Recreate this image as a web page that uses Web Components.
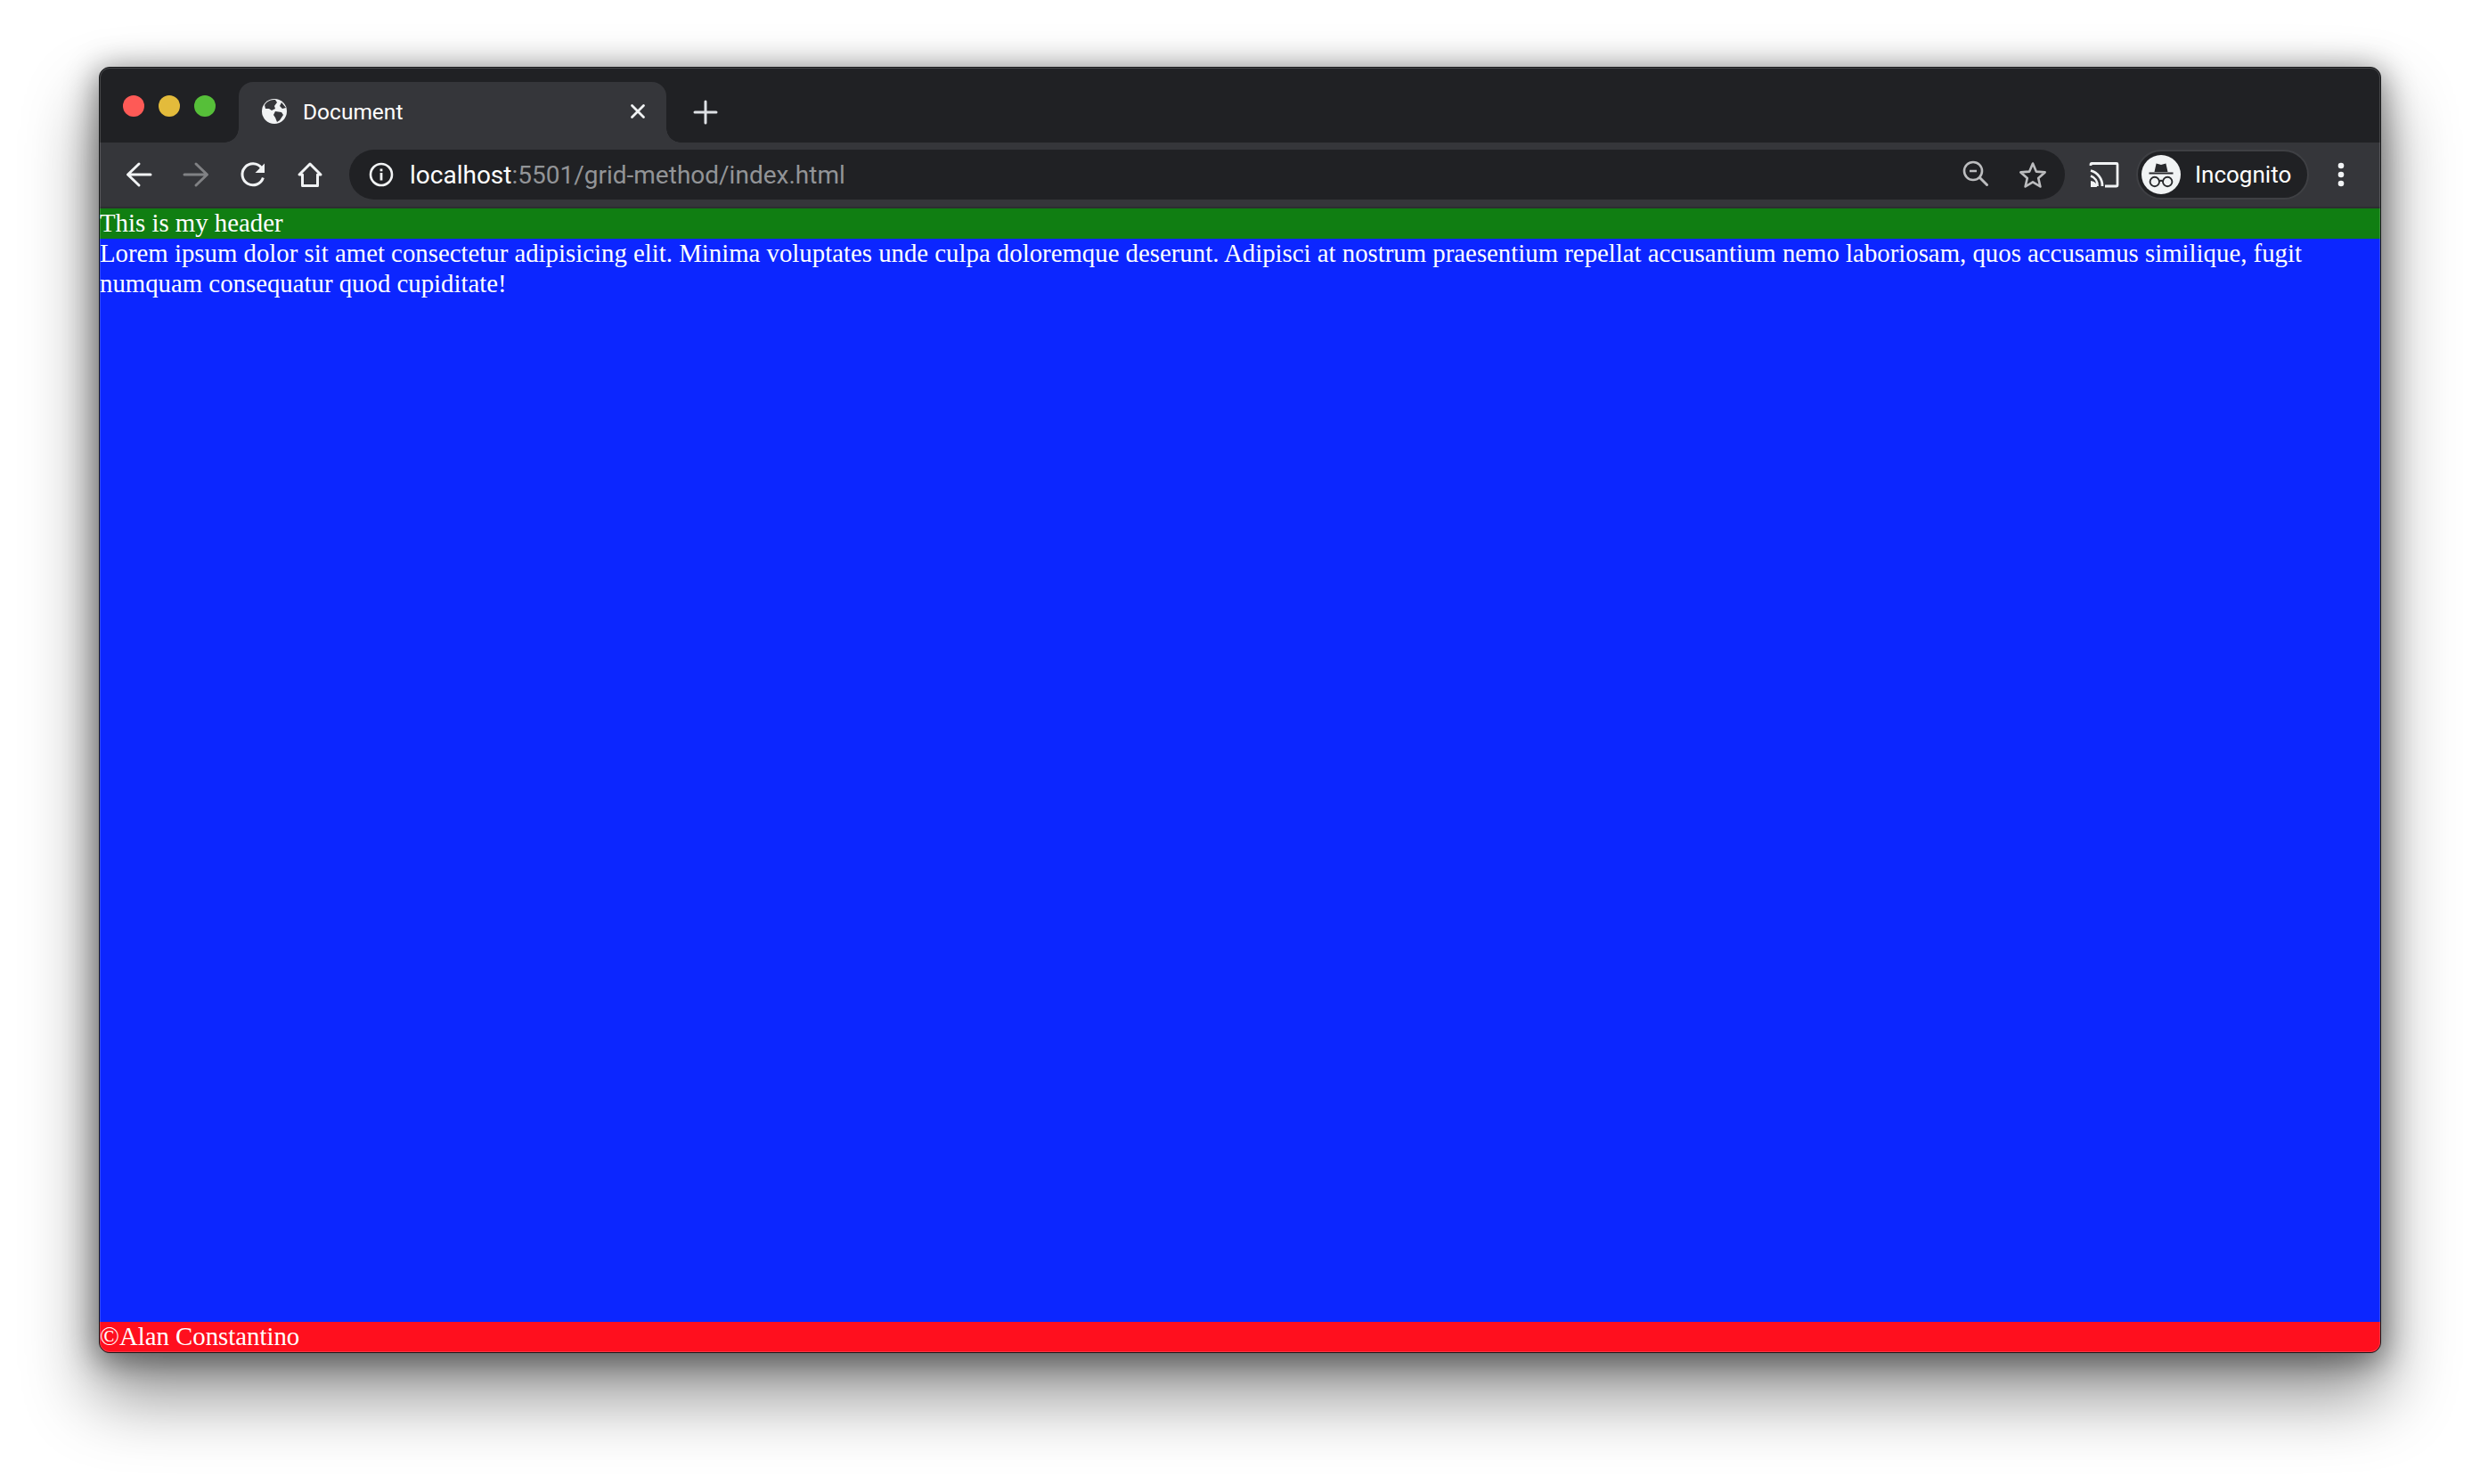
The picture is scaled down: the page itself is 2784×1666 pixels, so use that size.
<!DOCTYPE html>
<html lang="en"><head><meta charset="utf-8"><title>Document</title>
<style>
html,body{margin:0;height:100%;background:#fff}
body{display:flex;flex-direction:column;box-sizing:border-box;padding:75px 111px 147px 111px;font-family:"Liberation Serif",serif}
</style></head>
<body>
<browser-window>
  <tab-strip slot="chrome"><browser-tab>Document</browser-tab></tab-strip>
  <tool-bar slot="chrome"></tool-bar>
  <page-frame>
    <span slot="header">This is my header</span>
    Lorem ipsum dolor sit amet consectetur adipisicing elit. Minima voluptates unde culpa doloremque deserunt. Adipisci at nostrum praesentium repellat accusantium nemo laboriosam, quos accusamus similique, fugit numquam consequatur quod cupiditate!
    <span slot="footer">©Alan Constantino</span>
  </page-frame>
</browser-window>
<script>
const def=(name,html)=>customElements.define(name,class extends HTMLElement{
  constructor(){super();this.attachShadow({mode:"open"}).innerHTML=html;}
});
def("browser-window",`<style>
:host{flex:1;display:flex;flex-direction:column;min-height:0;box-sizing:border-box;position:relative;border:1px solid #17181a;border-radius:12px;overflow:hidden;background:#202124;box-shadow:0 44px 78px 6px rgba(0,0,0,.42),0 6px 34px 4px rgba(0,0,0,.42)}
:host::after{content:"";position:absolute;inset:0;border-radius:11px;box-shadow:inset 0 0 0 1px rgba(255,255,255,.17);pointer-events:none}
</style><slot name="chrome"></slot><slot></slot>`);
def("tab-strip",`<style>
:host{display:flex;align-items:flex-start;height:84px;box-sizing:border-box;padding:16px 0 0 26px;background:#202124;flex:none}
.lights{display:flex;gap:16px;margin-top:15px;margin-right:26px}
.lights i{width:24px;height:24px;border-radius:50%;display:block}
.new{width:32px;height:32px;margin:18px 0 0 28px}
</style>
<div class="lights"><i style="background:#fe5a56"></i><i style="background:#e3bb3b"></i><i style="background:#56bf39"></i></div>
<slot></slot>
<svg class="new" viewBox="0 0 32 32"><path d="M16 4V28M4 16H28" stroke="#dee1e5" stroke-width="3" stroke-linecap="round" fill="none"/></svg>`);
def("browser-tab",`<style>
:host{display:flex;align-items:center;position:relative;width:480px;height:68px;box-sizing:border-box;padding:0 22px 2px 26px;background:#35363a;border-radius:16px 16px 0 0;color:#fff;font:24.5px Roboto,sans-serif}
:host::before,:host::after{content:"";position:absolute;bottom:0;width:16px;height:16px}
:host::before{left:-16px;background:radial-gradient(circle at 0 0,transparent 15.5px,#35363a 16px)}
:host::after{right:-16px;background:radial-gradient(circle at 100% 0,transparent 15.5px,#35363a 16px)}
.globe{width:28px;height:28px;margin-right:18px;flex:none}
.t{flex:1}
.x{width:20px;height:20px;flex:none}
</style>
<svg class="globe" viewBox="0 0 28 28"><circle cx="14" cy="14" r="14" fill="#f1f3f4"/><path d="M3 7 C6 2 10 1 15 1 L17 4 L14 8 L15 11 L11 13 L8 11 L4 11 Z M15 14 L22 15 L24 18 L20 24 L17 26 L15 21 L13 18 Z M22 4 L27 10 L23 11 L20 8 Z" fill="#35363a"/></svg>
<span class="t"><slot></slot></span>
<svg class="x" viewBox="0 0 20 20"><path d="M3.5 3.5L16.5 16.5M16.5 3.5L3.5 16.5" stroke="#f1f3f4" stroke-width="2.8" stroke-linecap="round" fill="none"/></svg>`);
def("tool-button",`<style>
:host{display:flex;align-items:center;justify-content:center;width:64px;height:64px;flex:none}
</style><slot></slot>`);
def("omni-box",`<style>
:host{flex:1;display:flex;align-items:center;height:56px;box-sizing:border-box;padding:0 20px 0 22px;background:#202124;border-radius:28px;color:#fff;font:28px Roboto,sans-serif;min-width:0}
.url{flex:1;margin-left:18px;white-space:nowrap}
.url b{font-weight:400;color:#929497}
svg{flex:none;display:block}
.info{width:28px;height:28px}
.zoom{width:32px;height:32px;margin-right:32px}
.star{width:32px;height:32px}
</style>
<svg class="info" viewBox="0 0 28 28"><circle cx="14" cy="14" r="12" fill="none" stroke="#f1f3f4" stroke-width="2.6"/><rect x="12.6" y="7.5" width="2.8" height="2.8" fill="#f1f3f4"/><rect x="12.6" y="12" width="2.8" height="8.5" fill="#f1f3f4"/></svg>
<span class="url">localhost<b>:5501/grid-method/index.html</b></span>
<svg class="zoom" viewBox="0 0 32 32"><circle cx="13" cy="12" r="10" fill="none" stroke="#bcbdbf" stroke-width="2.6"/><path d="M9 12H17" stroke="#bcbdbf" stroke-width="2.4"/><path d="M20.5 19.5L28.5 27.5" stroke="#bcbdbf" stroke-width="3" stroke-linecap="round"/></svg>
<svg class="star" viewBox="0 0 32 32"><path d="M16 3.5L19.8 12.6L29.6 13.4L22.2 19.9L24.4 29.5L16 24.4L7.6 29.5L9.8 19.9L2.4 13.4L12.2 12.6Z" fill="none" stroke="#bcbdbf" stroke-width="2.6" stroke-linejoin="round"/></svg>`);
def("incognito-pill",`<style>
:host{display:flex;align-items:center;width:194px;height:56px;box-sizing:border-box;margin-left:4px;padding:0 0 0 4px;background:#202124;border:2px solid #3f4044;border-radius:28px;color:#fff;font:26px Roboto,sans-serif;flex:none}
svg{width:44px;height:44px;margin-right:16px;flex:none}
</style>
<svg viewBox="0 0 44 44"><circle cx="22" cy="22" r="22" fill="#f1f3f4"/><path d="M14.5 19L16.6 9.5L22 11L27.4 9.5L29.5 19Z" fill="#28292c"/><path d="M8.5 20.5H35.5" stroke="#28292c" stroke-width="2.2"/><circle cx="14.8" cy="30" r="5.2" fill="none" stroke="#28292c" stroke-width="1.9"/><circle cx="29.2" cy="30" r="5.2" fill="none" stroke="#28292c" stroke-width="1.9"/><path d="M20 29.5Q22 28 24 29.5" fill="none" stroke="#28292c" stroke-width="1.9"/></svg>
<span>Incognito</span>`);
def("tool-bar",`<style>
:host{display:flex;align-items:center;height:74px;box-sizing:border-box;padding:0 12px;background:#35363a;border-bottom:2px solid #2d2e31;flex:none}
omni-box{margin:0 12px 0 12px}
svg{display:block}
.menu{margin-left:4px}
</style>
<tool-button><svg width="32" height="32" viewBox="0 0 32 32"><path d="M29 16H4M16 4L3.5 16L16 28" fill="none" stroke="#f1f3f4" stroke-width="3" stroke-linecap="round" stroke-linejoin="round"/></svg></tool-button>
<tool-button><svg width="32" height="32" viewBox="0 0 32 32"><path d="M3 16H28M16 4L28.500 16L16 28" fill="none" stroke="#808184" stroke-width="3" stroke-linecap="round" stroke-linejoin="round"/></svg></tool-button>
<tool-button><svg width="32" height="32" viewBox="0 0 32 32"><path d="M25.500 8.500A12 12 0 1 0 27.400 19.500" fill="none" stroke="#f1f3f4" stroke-width="3"/><path d="M29 3.500V14H18.500Z" fill="#f1f3f4"/></svg></tool-button>
<tool-button><svg width="32" height="32" viewBox="0 0 32 32"><path d="M16 4L4 16H7.500V28.500H24.500V16H28Z" fill="none" stroke="#f1f3f4" stroke-width="3" stroke-linejoin="round"/></svg></tool-button>
<omni-box></omni-box>
<tool-button><svg width="34" height="30" viewBox="0 0 34 30"><path d="M2 5V3.500Q2 2.500 3 2.500H31Q32 2.500 32 3.500V27Q32 28 31 28H18" fill="none" stroke="#f1f3f4" stroke-width="2.800"/><path d="M2 10.500A17.500 17.500 0 0 1 15 28" fill="none" stroke="#f1f3f4" stroke-width="2.800"/><path d="M2 16.500A11.500 11.500 0 0 1 9.500 28" fill="none" stroke="#f1f3f4" stroke-width="2.800"/><path d="M2 22V29H9Q9 23 2 22Z" fill="#f1f3f4"/></svg></tool-button>
<incognito-pill></incognito-pill>
<tool-button class="menu"><svg width="10" height="32" viewBox="0 0 10 32"><circle cx="5" cy="6" r="3.300" fill="#f1f3f4"/><circle cx="5" cy="16" r="3.300" fill="#f1f3f4"/><circle cx="5" cy="26" r="3.300" fill="#f1f3f4"/></svg></tool-button>`);
def("page-frame",`<style>
:host{flex:1;min-height:0;display:grid;grid-template-rows:34px 1fr 34px;color:#fff;font:28.8px/34px "Liberation Serif","Times New Roman",serif}
header{background:#107e12;line-height:32px}
main{background:#0c26ff}
main div{margin-top:-1px}
footer{background:#ff0f1e;line-height:32px}
</style>
<header><slot name="header"></slot></header>
<main><div><slot></slot></div></main>
<footer><slot name="footer"></slot></footer>`);
</script>
</body></html>
